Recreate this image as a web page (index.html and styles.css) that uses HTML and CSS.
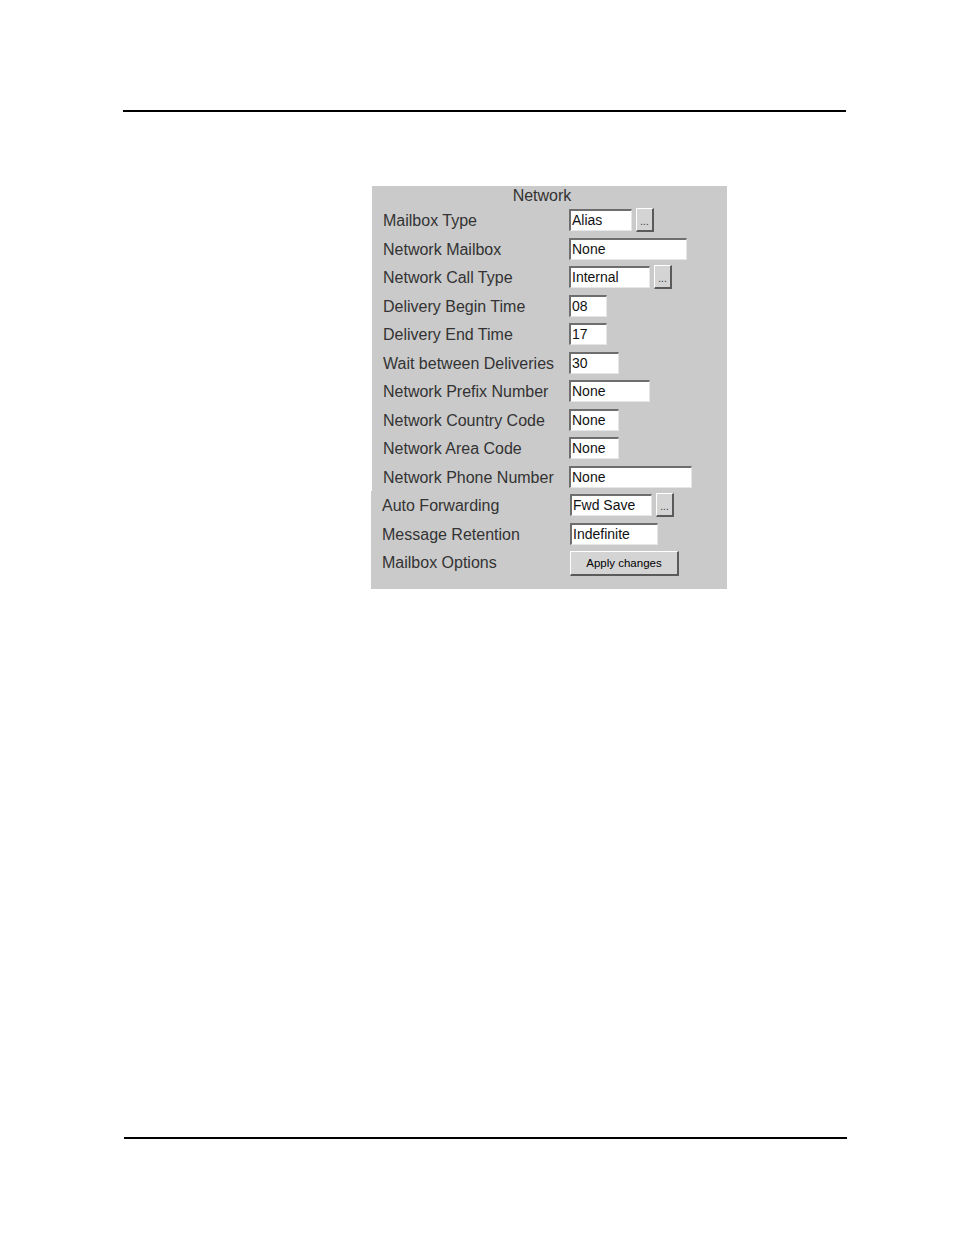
FILE: index.html
```html
<!DOCTYPE html>
<html>
<head>
<meta charset="utf-8">
<link rel="stylesheet" href="styles.css">
</head>
<body>
<div class="rule rule-top"></div>
<div class="panel panel-top">
  <div class="title">Network</div>
  <div class="row"><span class="label">Mailbox Type</span><div class="ctl"><div class="field" style="width:63px">Alias</div><div class="dots">...</div></div></div>
  <div class="row"><span class="label">Network Mailbox</span><div class="ctl"><div class="field" style="width:118px">None</div></div></div>
  <div class="row"><span class="label">Network Call Type</span><div class="ctl"><div class="field" style="width:81px">Internal</div><div class="dots">...</div></div></div>
  <div class="row"><span class="label">Delivery Begin Time</span><div class="ctl"><div class="field" style="width:38px">08</div></div></div>
  <div class="row"><span class="label">Delivery End Time</span><div class="ctl"><div class="field" style="width:38px">17</div></div></div>
  <div class="row"><span class="label">Wait between Deliveries</span><div class="ctl"><div class="field" style="width:50px">30</div></div></div>
  <div class="row"><span class="label">Network Prefix Number</span><div class="ctl"><div class="field" style="width:81px">None</div></div></div>
  <div class="row"><span class="label">Network Country Code</span><div class="ctl"><div class="field" style="width:50px">None</div></div></div>
  <div class="row"><span class="label">Network Area Code</span><div class="ctl"><div class="field" style="width:50px">None</div></div></div>
  <div class="row"><span class="label">Network Phone Number</span><div class="ctl"><div class="field" style="width:123px">None</div></div></div>
</div>
<div class="panel panel-bottom">
  <div class="row"><span class="label">Auto Forwarding</span><div class="ctl"><div class="field" style="width:82px">Fwd Save</div><div class="dots">...</div></div></div>
  <div class="row"><span class="label">Message Retention</span><div class="ctl"><div class="field" style="width:88px">Indefinite</div></div></div>
  <div class="row"><span class="label">Mailbox Options</span><div class="ctl"><div class="apply">Apply changes</div></div></div>
</div>
<div class="rule rule-bottom"></div>
</body>
</html>
```
FILE: styles.css
```css
html, body {
  margin: 0;
  padding: 0;
  background: #ffffff;
  font-family: "Liberation Sans", Arial, sans-serif;
}
body {
  width: 954px;
  height: 1235px;
  overflow: hidden;
}
.rule {
  height: 2px;
  background: #000;
}
.rule-top {
  margin-top: 110px;
  margin-left: 123px;
  width: 723px;
}
.rule-bottom {
  margin-top: 548px;
  margin-left: 124px;
  width: 723px;
}
.panel {
  background: #cacaca;
  box-sizing: border-box;
}
.panel-top {
  margin-top: 74px;
  margin-left: 372px;
  width: 355px;
  padding-left: 11px;
}
.panel-bottom {
  margin-left: 371px;
  width: 356px;
  padding-left: 11px;
  padding-bottom: 12px;
}
.panel-bottom .row {
  grid-template-columns: 188px auto;
}
.title {
  height: 20px;
  line-height: 19px;
  text-align: center;
  font-size: 16px;
  color: #333;
  padding-right: 26px;
}
.row {
  display: grid;
  grid-template-columns: 186px auto;
  align-items: center;
  height: 28.5px;
}
.label {
  font-size: 16px;
  color: #333;
  white-space: nowrap;
  padding-top: 2px;
}
.ctl {
  display: flex;
  align-items: center;
  gap: 4px;
}
.field {
  box-sizing: border-box;
  height: 22px;
  background: #fff;
  border-style: solid;
  border-width: 2px 1px 1px 2px;
  border-color: #6e6e6e #e6e6e6 #e6e6e6 #6e6e6e;
  font-size: 14px;
  line-height: 18px;
  padding-left: 1px;
  color: #111;
  white-space: nowrap;
  overflow: hidden;
}
.dots {
  box-sizing: border-box;
  width: 18px;
  height: 24px;
  background: #d4d4d4;
  border-style: solid;
  border-width: 1px 2px 2px 1px;
  border-color: #ffffff #5a5a5a #5a5a5a #ffffff;
  font-size: 10px;
  line-height: 26px;
  text-align: center;
  color: #333;
}
.apply {
  box-sizing: border-box;
  width: 109px;
  height: 25px;
  margin-top: 2px;
  background: #d4d4d4;
  border-style: solid;
  border-width: 1px 2px 2px 1px;
  border-color: #ffffff #5a5a5a #5a5a5a #ffffff;
  font-size: 11.5px;
  line-height: 22px;
  text-align: center;
  color: #000;
}
```
